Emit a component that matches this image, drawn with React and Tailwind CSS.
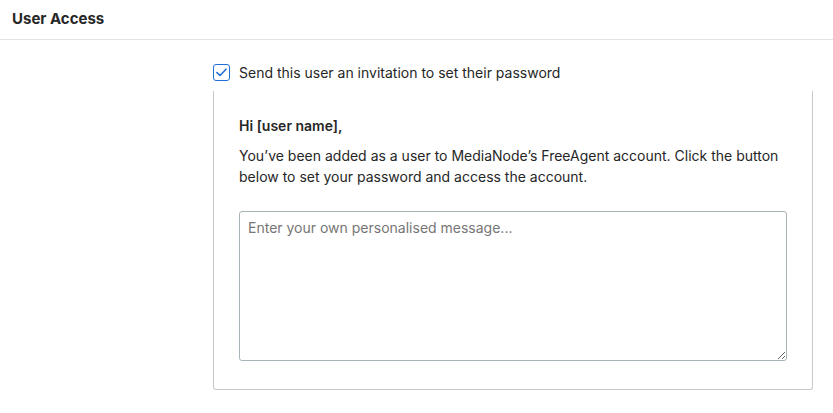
export default function App() {
  return (
    <div className="w-[833px] h-[413px] bg-white text-[#1d1d1d] overflow-hidden" style={{ fontFamily: 'Inter, "Liberation Sans", Arial, sans-serif' }}>
      <div className="h-[40px] border-b border-[#e3e3e3] px-3 flex items-center">
        <h2 className="text-[15px] font-bold text-[#262626] leading-none -mt-[3px]">User Access</h2>
      </div>
      <div className="pl-[213px] pt-[23px]">
        <label className="flex items-center gap-[9px] h-[18px]">
          <span className="w-[17px] h-[17px] rounded-[3px] border border-[#1f6fd6] flex items-center justify-center">
            <svg width="11" height="9" viewBox="0 0 11 9" fill="none">
              <path d="M1 4.6 L4 7.5 L10 1.2" stroke="#1f6fd6" strokeWidth="1.6" strokeLinecap="round" strokeLinejoin="round" />
            </svg>
          </span>
          <span className="text-[14px] text-[#262626]">Send this user an invitation to set their password</span>
        </label>
        <div className="mt-[10px] w-[600px] h-[299px] border-l border-r border-b border-[#c8c8c8] rounded-b-[3px] pt-[24px] px-[25px]">
          <p className="text-[14px] font-semibold text-[#262626] leading-[21px]">Hi [user name],</p>
          <p className="mt-[9px] text-[14px] text-[#262626] leading-[21px]">
            You’ve been added as a user to MediaNode’s FreeAgent account. Click the button below to set your password and access the account.
          </p>
          <textarea
            className="mt-[24px] block w-[548px] h-[150px] border border-[#a9b4b8] rounded-[3px] px-[8px] py-[5px] text-[14px] text-[#262626] placeholder:text-[#767676] outline-none"
            placeholder="Enter your own personalised message..."
          />
        </div>
      </div>
    </div>
  );
}
